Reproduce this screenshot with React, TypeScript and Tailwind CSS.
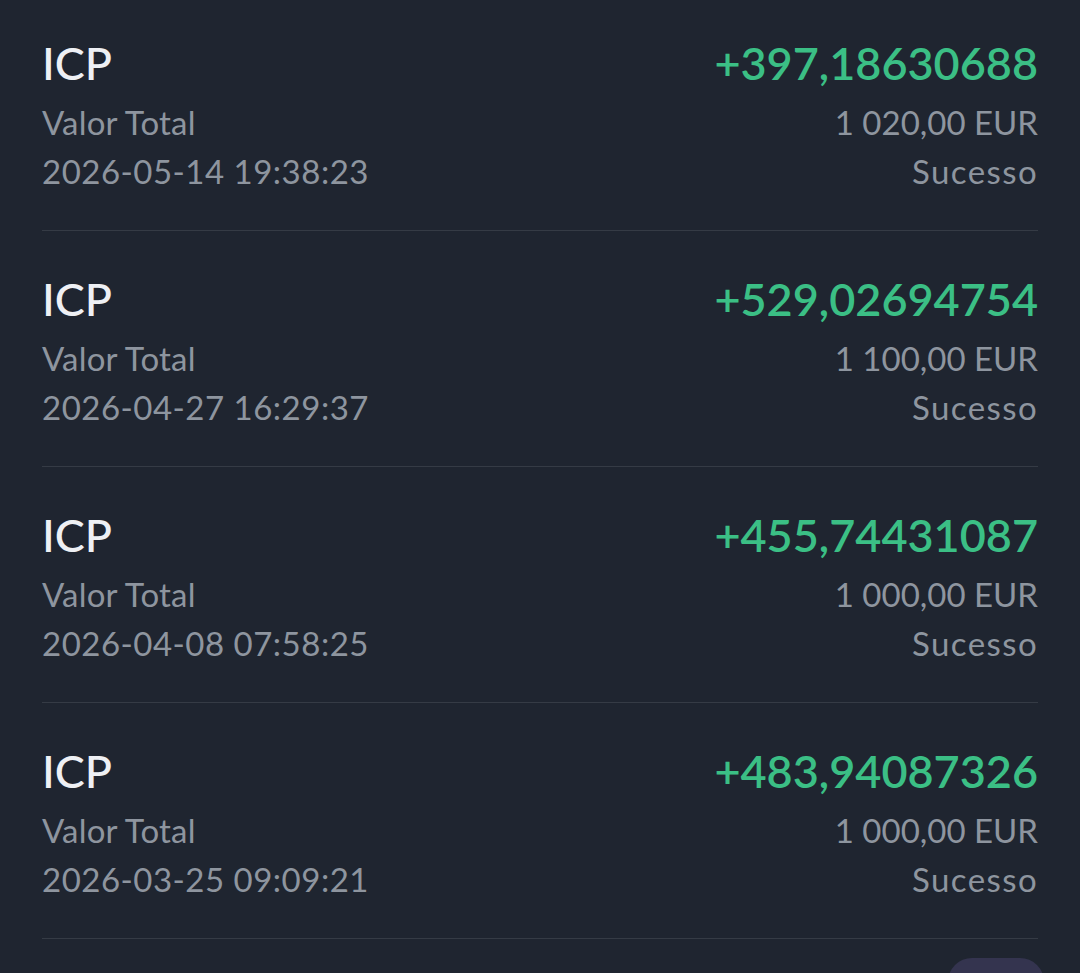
const rows = [
  { amount: "+397,18630688", total: "1 020,00 EUR", date: "2026-05-14 19:38:23" },
  { amount: "+529,02694754", total: "1 100,00 EUR", date: "2026-04-27 16:29:37" },
  { amount: "+455,74431087", total: "1 000,00 EUR", date: "2026-04-08 07:58:25" },
  { amount: "+483,94087326", total: "1 000,00 EUR", date: "2026-03-25 09:09:21" },
];

export default function App() {
  return (
    <div
      className="relative h-[973px] w-[1080px] overflow-hidden bg-[#1f2530]"
      style={{ fontFamily: "Lato, 'Noto Sans', sans-serif" }}
    >
      <div className="-mt-[5px] px-[42px]">
        {rows.map((r, i) => (
          <div key={i} className="flex justify-between border-b border-[#353b45] pt-[34px] pb-[35px]">
            <div className="flex flex-col">
              <span className="h-[68px] text-[45px] leading-[68px] font-medium text-[#eef0f4]">ICP</span>
              <span className="h-[50px] text-[33px] leading-[50px] tracking-[0.2px] text-[#8e959f]">Valor Total</span>
              <span className="h-[48px] text-[33px] leading-[48px] tracking-[0.5px] text-[#8e959f]">{r.date}</span>
            </div>
            <div className="flex flex-col items-end">
              <span className="h-[68px] text-[45px] leading-[68px] font-semibold text-[#3bbf85]">{r.amount}</span>
              <span className="h-[50px] text-[33px] leading-[50px] text-[#8e959f]">{r.total}</span>
              <span className="h-[48px] text-[33px] leading-[48px] tracking-[1.4px] text-[#8e959f]">Sucesso</span>
            </div>
          </div>
        ))}
      </div>
      <div className="absolute left-[948px] top-[958px] h-[60px] w-[96px] rounded-[24px] bg-[#34344f]" />
    </div>
  );
}
